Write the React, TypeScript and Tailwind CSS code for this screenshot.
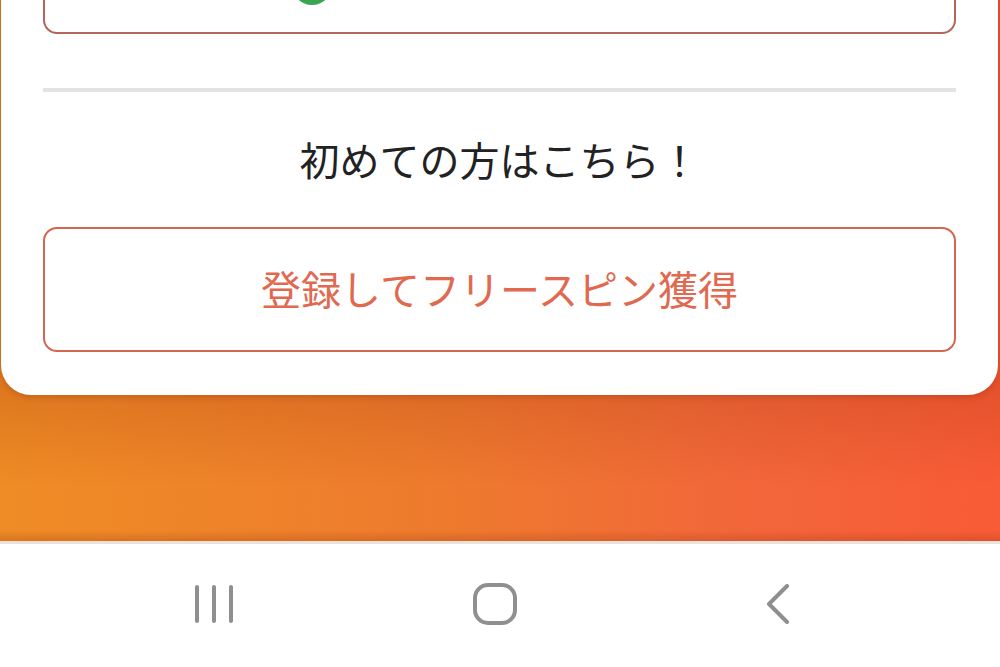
export default function App() {
  return (
    <div
      className="flex h-[667px] w-[1000px] flex-col overflow-hidden bg-white"
      style={{ fontFamily: '"Noto Sans CJK JP", "Noto Sans", sans-serif' }}
    >
      <div className="relative flex-1 bg-[linear-gradient(180deg,rgba(160,50,10,0.22)_72%,rgba(0,0,0,0)_90%,rgba(0,0,0,0)_98%,rgba(150,50,10,0.25)_100%),linear-gradient(90deg,#ef8c25_0%,#ee7a2e_45%,#f2663a_75%,#f85b37_100%)]">
        <div className="ml-[1px] mr-[2px] rounded-b-[30px] bg-white px-[42px] pb-[43px] shadow-[0_2px_6px_rgba(120,40,0,0.25)]">
          <div className="-mt-[86px] flex h-[120px] items-end rounded-[14px] border-2 border-[#b5655a] pb-[27px] pl-[247px]">
            <div className="h-[40px] w-[40px] rounded-full bg-[#3aa655]" />
          </div>
          <div className="mt-[54px] h-[4px] bg-[#e3e3e3]" />
          <div className="mt-[37px] text-center text-[40px] leading-[60px] text-[#222]">
            初めての方はこちら！
          </div>
          <button className="mt-[38px] flex h-[125px] w-full items-center justify-center rounded-[14px] border-2 border-[#d4664f] pb-[4px] text-[40px] text-[#e0694f]">
            登録してフリースピン獲得
          </button>
        </div>
      </div>
      <div className="flex h-[126px] items-center border-t-[3px] border-[#ece2dc] pl-[184px] pb-[4px]">
        <div className="flex h-[60px] w-[60px] items-center justify-center">
          <svg width="40" height="40" viewBox="0 0 40 40" fill="none" stroke="#8f8f8f" strokeWidth="4" strokeLinecap="round">
            <path d="M3 3v34M20 3v34M37 3v34" />
          </svg>
        </div>
        <div className="ml-[221px] flex h-[60px] w-[60px] items-center justify-center">
          <svg width="44" height="42" viewBox="0 0 44 42" fill="none" stroke="#8f8f8f" strokeWidth="4">
            <rect x="2" y="2" width="40" height="38" rx="13" />
          </svg>
        </div>
        <div className="ml-[223px] flex h-[60px] w-[60px] items-center justify-center">
          <svg width="26" height="40" viewBox="0 0 26 40" fill="none" stroke="#8f8f8f" strokeWidth="4" strokeLinecap="round" strokeLinejoin="round">
            <path d="M22 2L4 20l18 18" />
          </svg>
        </div>
      </div>
    </div>
  );
}
